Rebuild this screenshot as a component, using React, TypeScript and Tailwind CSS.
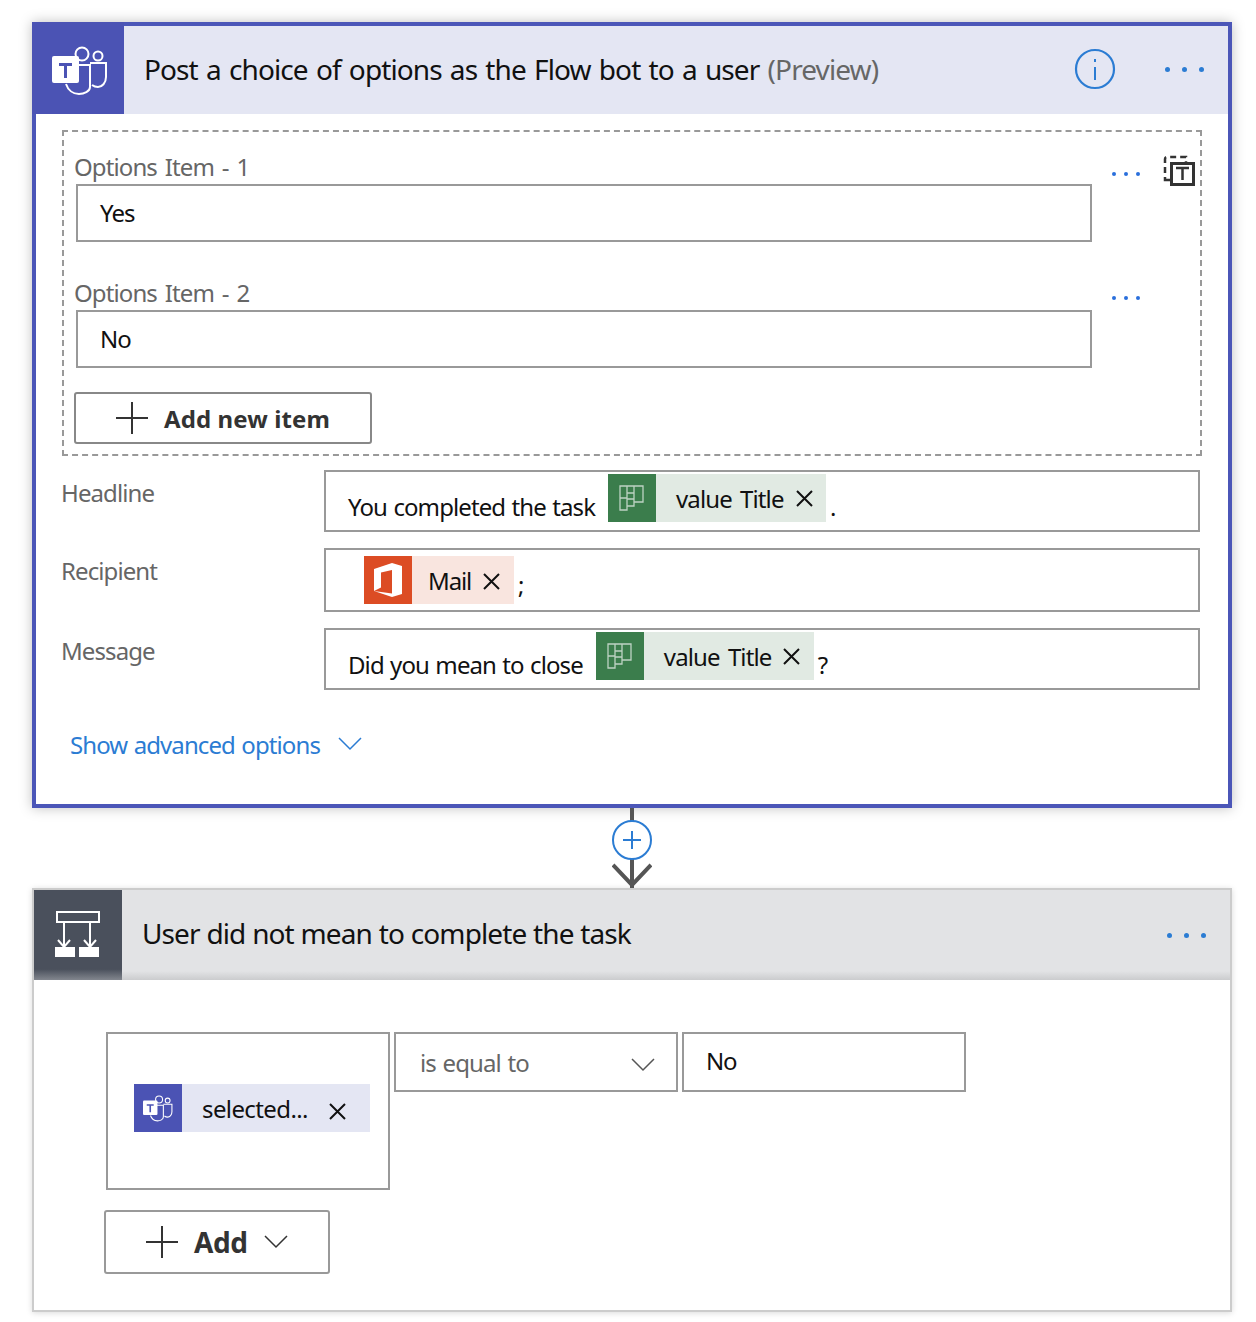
const font = "font-['Noto_Sans','Liberation_Sans',sans-serif]";

function TeamsIcon({ size }: { size: number }) {
	return (
		<svg width={size} height={size} viewBox="0 0 56 50" fill="none">
			<circle cx="30" cy="9" r="6.5" stroke="white" strokeWidth="2" />
			<circle cx="46" cy="11" r="4.5" stroke="white" strokeWidth="2" />
			<path d="M38 18h16v14c0 6-4 10-8 10-2 0-4-.5-6-2" stroke="white" strokeWidth="2" />
			<path d="M14 20h24v22c0 4.500-6 7-11 7-6 0-11-4-13-10" stroke="white" strokeWidth="2" />
			<rect x="0" y="11" width="27" height="27" rx="2" fill="white" />
			<path d="M7 18h13v3h-5v12h-3V21H7z" fill="#4b53b4" />
		</svg>
	);
}

function PlannerIcon() {
	return (
		<svg width="26" height="26" viewBox="0 0 26 26" fill="none" stroke="#dfe9e2" strokeWidth="1.300" className="opacity-80">
			<path d="M1 1h7v24H1zM8 1h7v20H8zM15 1h9v16h-9zM1 13h7M8 8h7M8 14h7" />
		</svg>
	);
}

function OfficeIcon() {
	return (
		<svg width="28" height="34" viewBox="0 0 28 34">
			<path d="M0 6 18 0l10 3v28l-10 3L0 28l18 2.500V7L7 9.500v15L0 28z" fill="white" />
		</svg>
	);
}

function Close({ className }: { className: string }) {
	return (
		<svg width="17" height="17" viewBox="0 0 17 17" stroke="#111" strokeWidth="2" className={className}>
			<path d="M1 1l15 15M16 1 1 16" />
		</svg>
	);
}

function Dots({ big }: { big?: boolean }) {
	const dot = big ? 'w-[5px] h-[5px] bg-[#2b7cd3]' : 'w-[4px] h-[4px] bg-[#2a6fdc]';
	return (
		<div className={big ? 'flex gap-[12px]' : 'flex gap-[8px]'}>
			<span className={`${dot} rounded-full`} />
			<span className={`${dot} rounded-full`} />
			<span className={`${dot} rounded-full`} />
		</div>
	);
}

function Plus() {
	return (
		<svg width="32" height="32" viewBox="0 0 32 32" stroke="#333" strokeWidth="2">
			<path d="M0 16h32M16 0v32" />
		</svg>
	);
}

function Chevron({ color, w }: { color: string; w: number }) {
	return (
		<svg width={w} height={w / 2 + 2} viewBox="0 0 24 14" fill="none" stroke={color} strokeWidth="1.500">
			<path d="M1 1l11 11L23 1" />
		</svg>
	);
}

function Token({ label, w }: { label: string; w: string }) {
	return (
		<div className={`flex h-[48px] items-center bg-[#e1eae3] ${w}`}>
			<div className="flex h-[48px] w-[48px] shrink-0 items-center justify-center bg-[#3b7d4c]">
				<PlannerIcon />
			</div>
			<span className="ml-[20px] mt-[2px] text-[24px] tracking-[-0.9px] [word-spacing:3px] text-[#111]">{label}</span>
			<Close className="ml-[12px]" />
		</div>
	);
}

function OptionItem({ n, value, trash }: { n: number; value: string; trash?: boolean }) {
	return (
		<div className="relative">
			<div className="pl-[10px] text-[24px] leading-[28px] tracking-[-0.9px] [word-spacing:2.500px] text-[#666]">Options Item - {n}</div>
			<div className="ml-[12px] mt-[3px] flex h-[58px] w-[1016px] items-center border-2 border-[#999] pl-[22px] text-[24px] tracking-[-0.9px] text-[#111]">
				{value}
			</div>
			<div className={`absolute left-[1048px] ${trash ? 'top-[19px]' : 'top-[17px]'}`}>
				<Dots />
			</div>
			{trash && (
				<svg width="34" height="34" viewBox="0 0 34 34" fill="none" className="absolute left-[1098px] top-[0px]">
					<path d="M3 20V6a2 2 0 0 1 2-2h19v5" stroke="#333" strokeWidth="2.500" strokeDasharray="6 4" />
					<path d="M3 24v3h5" stroke="#333" strokeWidth="2.500" />
					<rect x="9.500" y="10.500" width="22" height="21" stroke="#333" strokeWidth="3" fill="white" />
					<path d="M14 15h13M20.500 15v12" stroke="#333" strokeWidth="2.500" />
				</svg>
			)}
		</div>
	);
}

function Field({ label, h, mt, children }: { label: string; h: string; mt: string; children: React.ReactNode }) {
	return (
		<div className={`flex ${mt}`}>
			<div className="-ml-[1px] mr-[1px] mt-[8px] w-[262px] text-[24px] leading-[30px] tracking-[-0.9px] text-[#666]">{label}</div>
			<div className={`flex w-[876px] items-start border-2 border-[#999] ${h}`}>{children}</div>
		</div>
	);
}

export default function App() {
	return (
		<div className={`${font} h-[1322px] w-[1256px] overflow-hidden bg-white pl-[32px] pt-[22px]`}>
			{/* Teams action */}
			<div className="h-[786px] w-[1200px] border-4 border-[#4b56b8] bg-white shadow-[0_0_12px_rgba(0,0,0,0.25)]">
				<div className="flex h-[88px] items-center bg-[#e4e6f3]">
					<div className="-ml-[4px] -mt-[4px] flex h-[92px] w-[92px] items-center justify-center bg-[#4b53b4] pl-[4px] pt-[4px]">
						<TeamsIcon size={56} />
					</div>
					<div className="-mt-[2px] ml-[20px] text-[28px] tracking-[-0.9px] [word-spacing:1.800px] text-[#111]">
						Post a choice of options as the Flow bot to a user <span className="text-[#666]">(Preview)</span>
					</div>
					<svg width="42" height="42" viewBox="0 0 42 42" fill="none" className="-mt-[2px] ml-auto">
						<circle cx="21" cy="21" r="19" stroke="#2b7cd3" strokeWidth="2.200" />
						<path d="M21 19v13M21 11v3" stroke="#2b7cd3" strokeWidth="2" />
					</svg>
					<div className="ml-[49px] mr-[24px] -mt-[1px]">
						<Dots big />
					</div>
				</div>

				<div className="pl-[26px]">
					<div className="mt-[16px] h-[326px] w-[1140px] border-2 border-dashed border-[#999] pt-[21px]">
						<OptionItem n={1} value="Yes" trash />
						<div className="mt-[37px]">
							<OptionItem n={2} value="No" />
						</div>
						<button className="ml-[10px] mt-[24px] flex h-[52px] w-[298px] items-center rounded-[3px] border-2 border-[#888] pl-[40px]">
							<Plus />
							<span className="ml-[16px] mt-[2px] text-[24px] font-bold tracking-[0.1px] text-[#333]">Add new item</span>
						</button>
					</div>

					<Field label="Headline" h="h-[62px]" mt="mt-[14px]">
						<span className="ml-[22px] mt-[20px] text-[24px] leading-[30px] tracking-[-0.9px] [word-spacing:1px] text-[#111]">You completed the task</span>
						<div className="ml-[13px] mt-[2px]">
							<Token label="value Title" w="w-[218px]" />
						</div>
						<span className="ml-[4px] mt-[20px] text-[24px] leading-[30px] text-[#111]">.</span>
					</Field>
					<Field label="Recipient" h="h-[64px]" mt="mt-[16px]">
						<div className="ml-[38px] mt-[6px] flex h-[48px] w-[150px] items-center bg-[#f9e5df]">
							<div className="flex h-[48px] w-[48px] shrink-0 items-center justify-center bg-[#dc4c24]">
								<OfficeIcon />
							</div>
							<span className="ml-[16px] mt-[2px] text-[24px] tracking-[-1.1px] text-[#111]">Mail</span>
							<Close className="ml-[12px] mt-[2px]" />
						</div>
						<span className="ml-[4px] mt-[20px] text-[24px] leading-[30px] text-[#111]">;</span>
					</Field>
					<Field label="Message" h="h-[62px]" mt="mt-[16px]">
						<span className="ml-[22px] mt-[20px] text-[24px] leading-[30px] tracking-[-0.9px] [word-spacing:1px] text-[#111]">Did you mean to close</span>
						<div className="ml-[13px] mt-[2px]">
							<Token label="value Title" w="w-[218px]" />
						</div>
						<span className="ml-[4px] mt-[20px] text-[24px] leading-[30px] text-[#111]">?</span>
					</Field>

					<div className="ml-[8px] mt-[38px] flex items-center">
						<span className="-mt-[1px] text-[24px] leading-[36px] tracking-[-0.9px] [word-spacing:1px] text-[#2b7cd3]">Show advanced options</span>
						<div className="ml-[18px] -mt-[3px]">
							<Chevron color="#2b7cd3" w={24} />
						</div>
					</div>
				</div>
			</div>

			{/* Connector */}
			<div className="relative ml-[598px] h-[80px] w-[4px] bg-[#555]">
				<div className="absolute left-[-18px] top-[12px] flex h-[40px] w-[40px] items-center justify-center rounded-full border-2 border-[#2b7cd3] bg-white">
					<svg width="18" height="18" viewBox="0 0 18 18" stroke="#2b7cd3" strokeWidth="2">
						<path d="M0 9h18M9 0v18" />
					</svg>
				</div>
				<svg width="40" height="24" viewBox="0 0 40 24" fill="none" stroke="#555" strokeWidth="4" className="absolute left-[-18px] top-[55px]">
					<path d="M1 2l19 20L39 2" />
				</svg>
			</div>

			{/* Condition */}
			<div className="h-[424px] w-[1200px] border-2 border-[#ccc] bg-white shadow-[0_1px_6px_rgba(0,0,0,0.15)]">
				<div className="flex h-[90px] items-center bg-[linear-gradient(#e2e3e5_90%,#cbccce)]">
					<div className="flex h-[90px] w-[88px] items-center justify-center bg-[linear-gradient(#4a505c_88%,#82868e)]">
						<svg width="46" height="46" viewBox="0 0 46 46" fill="none" stroke="white" strokeWidth="2" className="-mt-[2px]">
							<rect x="2" y="1" width="42" height="10" />
							<path d="M9 11v25M3 29l6 7 6-7M35 11v25M29 29l6 7 6-7" />
							<rect x="0" y="36" width="20" height="10" fill="white" stroke="none" />
							<rect x="24" y="36" width="20" height="10" fill="white" stroke="none" />
						</svg>
					</div>
					<div className="-mt-[4px] ml-[20px] text-[28px] tracking-[-0.9px] [word-spacing:0.400px] text-[#111]">User did not mean to complete the task</div>
					<div className="ml-auto mr-[24px] mt-[1px]">
						<Dots big />
					</div>
				</div>

				<div className="pl-[72px] pt-[52px]">
					<div className="flex items-start gap-[4px]">
						<div className="flex h-[158px] w-[284px] items-start border-2 border-[#999] pl-[26px] pt-[50px]">
							<div className="flex h-[48px] w-[236px] items-center bg-[#e4e6f3]">
								<div className="flex h-[48px] w-[48px] shrink-0 items-center justify-center bg-[#4b53b4]">
									<TeamsIcon size={30} />
								</div>
								<span className="ml-[20px] mt-[1px] text-[24px] tracking-[-0.6px] text-[#111]">selected...</span>
								<Close className="ml-[21px] mt-[6px]" />
							</div>
						</div>
						<div className="flex h-[60px] w-[284px] items-center border-2 border-[#999] pl-[24px] text-[24px] tracking-[-0.9px] [word-spacing:1.300px] text-[#666]">
							<span className="mt-[2px]">is equal to</span>
							<div className="ml-auto mr-[21px] mt-[6px]">
								<Chevron color="#555" w={24} />
							</div>
						</div>
						<div className="flex h-[60px] w-[284px] border-2 border-[#999] pl-[22px] pt-[12px] text-[24px] leading-[30px] tracking-[-1.2px] text-[#111]">No</div>
					</div>
					<button className="-ml-[2px] mt-[20px] flex h-[64px] w-[226px] items-center rounded-[3px] border-2 border-[#999] pl-[40px]">
						<Plus />
						<span className="ml-[16px] text-[28px] font-bold tracking-[-0.4px] text-[#333]">Add</span>
						<div className="ml-[16px]">
							<Chevron color="#333" w={24} />
						</div>
					</button>
				</div>
			</div>
		</div>
	);
}
